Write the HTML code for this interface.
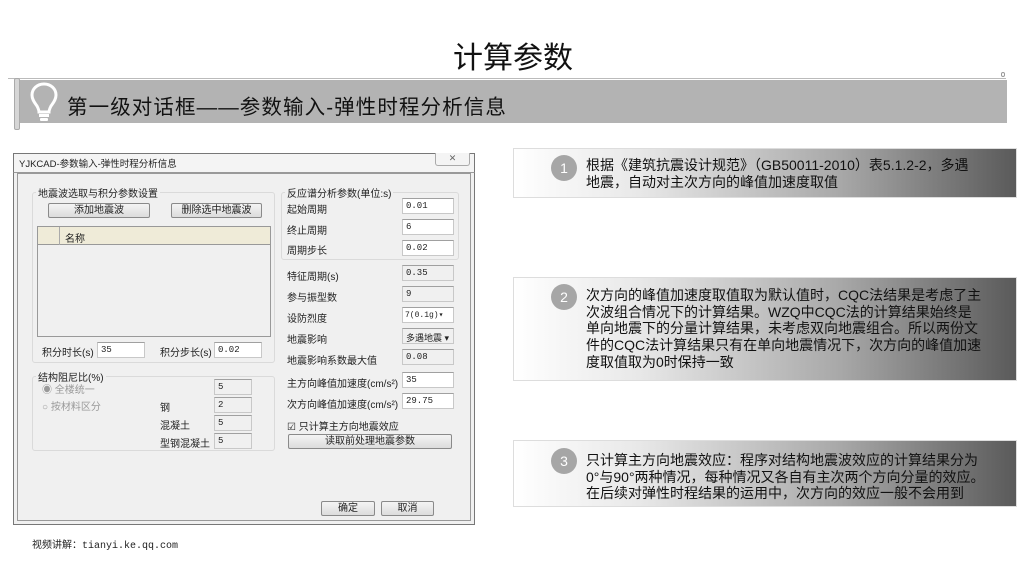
<!DOCTYPE html>
<html><head><meta charset="utf-8"><style>
*{margin:0;padding:0;box-sizing:border-box}
body{width:1024px;height:576px;background:#fff;position:relative;overflow:hidden;font-family:"Liberation Sans","Noto Sans CJK SC",sans-serif}
.a{position:absolute;white-space:nowrap}
.d{font-size:10px;color:#222;font-family:"Liberation Sans","WenQuanYi Zen Hei",sans-serif}
.in{position:absolute;background:#fff;border:1px solid #c8c8c8;border-top-color:#a0a0a0;font-size:9px;padding:2px 3px;height:16px;font-family:"Liberation Mono",monospace;color:#222;white-space:nowrap;overflow:hidden}
.ro{background:#f0f0f0}
.bt{position:absolute;border:1px solid #8a8a8a;border-radius:2px;background:linear-gradient(#f4f4f4,#dcdcdc);font-size:10px;text-align:center;line-height:13px;height:15px;color:#222}
.grp{position:absolute;border:1px solid #dadada;border-radius:3px}
.leg{position:absolute;background:#f0f0f0;padding:0 2px;font-size:10px;color:#222}
.box{position:absolute;left:513px;width:504px;background:linear-gradient(90deg,#fff 0%,#e8e8e8 25%,#a8a8a8 65%,#5a5a5a 100%);border:1px solid #ddd}
.c{position:absolute;left:37px;width:26px;height:26px;border-radius:50%;background:#a6a6a6;color:#fff;font-size:14px;text-align:center;line-height:26px}
.t{position:absolute;left:72px;font-size:14px;line-height:16.7px;color:#111;white-space:nowrap}
</style></head><body>
<div class="a" style="left:453px;top:33px;font-size:30px;color:#111">计算参数</div>
<div class="a" style="left:8px;top:78px;width:998px;height:1px;background:#bbb"></div>
<div class="a" style="left:1001px;top:72px;width:4px;height:5px;border:1px solid #999;border-radius:2px"></div>
<div class="a" style="left:17px;top:80px;width:990px;height:43px;background:#b3b3b3"></div>
<div class="a" style="left:14px;top:78px;width:6px;height:52px;background:#d6d6d6;border:1px solid #aaa;border-radius:2px"></div>
<svg class="a" style="left:30px;top:82px" width="28" height="42" viewBox="0 0 28 42"><path d="M14 2C7 2 2 7 2 13c0 5 3 8 5 11 1 2 2 4 2 6h10c0-2 1-4 2-6 2-3 5-6 5-11 0-6-5-11-12-11z" fill="none" stroke="#fff" stroke-width="3"/><rect x="9" y="32" width="10" height="3" fill="#fff"/><rect x="10" y="36" width="8" height="3" rx="1" fill="#fff"/></svg>
<div class="a" style="left:67px;top:90px;font-size:20.5px;letter-spacing:1.1px;color:#111">第一级对话框——参数输入-弹性时程分析信息</div>

<!-- dialog -->
<div class="a" style="left:13px;top:153px;width:462px;height:372px;background:#f0f0f0;border:1px solid #777"></div>
<div class="a" style="left:13px;top:153px;width:462px;height:20px;background:#f4f4f4;border:1px solid #777;border-bottom:1px solid #999"></div>
<div class="a d" style="left:19px;top:156px;font-size:9.5px">YJKCAD-参数输入-弹性时程分析信息</div>
<div class="a" style="left:435px;top:153px;width:35px;height:13px;border:1px solid #aaa;border-top:none;border-radius:0 0 3px 3px;background:#f4f4f4;font-size:9px;text-align:center;color:#666;line-height:11px">✕</div>
<div class="a" style="left:17px;top:173px;width:454px;height:348px;border:1px solid #999"></div>

<div class="grp" style="left:32px;top:192px;width:243px;height:171px"></div>
<div class="leg d" style="left:36px;top:185px">地震波选取与积分参数设置</div>
<div class="bt" style="left:48px;top:203px;width:102px">添加地震波</div>
<div class="bt" style="left:171px;top:203px;width:91px">删除选中地震波</div>
<div class="a" style="left:37px;top:226px;width:234px;height:111px;background:#f0f0f0;border:1px solid #999"></div>
<div class="a" style="left:38px;top:227px;width:232px;height:18px;background:#efebd8;border-bottom:1px solid #999"></div>
<div class="a" style="left:59px;top:227px;width:1px;height:18px;background:#aaa"></div>
<div class="a d" style="left:65px;top:230px">名称</div>
<div class="a d" style="left:42px;top:344px">积分时长(s)</div>
<div class="in" style="left:97px;top:342px;width:48px">35</div>
<div class="a d" style="left:160px;top:344px">积分步长(s)</div>
<div class="in" style="left:214px;top:342px;width:48px">0.02</div>

<div class="grp" style="left:32px;top:376px;width:243px;height:75px"></div>
<div class="leg d" style="left:36px;top:369px">结构阻尼比(%)</div>
<div class="a d" style="left:42px;top:381px;color:#999">◉ 全楼统一</div>
<div class="a d" style="left:42px;top:398px;color:#999">○ 按材料区分</div>
<div class="in ro" style="left:214px;top:379px;width:38px">5</div>
<div class="a d" style="left:160px;top:399px">钢</div>
<div class="in ro" style="left:214px;top:397px;width:38px">2</div>
<div class="a d" style="left:160px;top:417px">混凝土</div>
<div class="in ro" style="left:214px;top:415px;width:38px">5</div>
<div class="a d" style="left:160px;top:435px">型钢混凝土</div>
<div class="in ro" style="left:214px;top:433px;width:38px">5</div>

<div class="grp" style="left:281px;top:192px;width:178px;height:68px"></div>
<div class="leg d" style="left:285px;top:185px">反应谱分析参数(单位:s)</div>
<div class="a d" style="left:287px;top:201px">起始周期</div><div class="in" style="left:402px;top:198px;width:52px">0.01</div>
<div class="a d" style="left:287px;top:222px">终止周期</div><div class="in" style="left:402px;top:219px;width:52px">6</div>
<div class="a d" style="left:287px;top:242px">周期步长</div><div class="in" style="left:402px;top:240px;width:52px">0.02</div>
<div class="a d" style="left:287px;top:268px">特征周期(s)</div><div class="in ro" style="left:402px;top:265px;width:52px">0.35</div>
<div class="a d" style="left:287px;top:289px">参与振型数</div><div class="in ro" style="left:402px;top:286px;width:52px">9</div>
<div class="a d" style="left:287px;top:310px">设防烈度</div><div class="in" style="left:402px;top:307px;width:52px;font-size:8px;padding:2px 2px">7(0.1g)▾</div>
<div class="a d" style="left:287px;top:331px">地震影响</div><div class="in ro" style="left:402px;top:328px;width:52px;font-family:'WenQuanYi Zen Hei',sans-serif">多遇地震 ▾</div>
<div class="a d" style="left:287px;top:352px">地震影响系数最大值</div><div class="in ro" style="left:402px;top:349px;width:52px">0.08</div>
<div class="a d" style="left:287px;top:375px">主方向峰值加速度(cm/s²)</div><div class="in" style="left:402px;top:372px;width:52px">35</div>
<div class="a d" style="left:287px;top:396px">次方向峰值加速度(cm/s²)</div><div class="in" style="left:402px;top:393px;width:52px">29.75</div>
<div class="a d" style="left:287px;top:418px">☑ 只计算主方向地震效应</div>
<div class="bt" style="left:288px;top:434px;width:164px">读取前处理地震参数</div>
<div class="bt" style="left:321px;top:501px;width:54px">确定</div>
<div class="bt" style="left:381px;top:501px;width:53px">取消</div>

<div class="a" style="left:32px;top:536px;font-size:10px;color:#222;font-family:'Liberation Mono','WenQuanYi Zen Hei',monospace">视频讲解：tianyi.ke.qq.com</div>

<div class="box" style="top:148px;height:50px"><div class="c" style="top:6px">1</div><div class="t" style="top:8px">根据《建筑抗震设计规范》（GB50011-2010）表5.1.2-2，多遇<br>地震，自动对主次方向的峰值加速度取值</div></div>
<div class="box" style="top:277px;height:104px"><div class="c" style="top:6px">2</div><div class="t" style="top:9px">次方向的峰值加速度取值取为默认值时，CQC法结果是考虑了主<br>次波组合情况下的计算结果。WZQ中CQC法的计算结果始终是<br>单向地震下的分量计算结果，未考虑双向地震组合。所以两份文<br>件的CQC法计算结果只有在单向地震情况下，次方向的峰值加速<br>度取值取为0时保持一致</div></div>
<div class="box" style="top:440px;height:67px"><div class="c" style="top:7px">3</div><div class="t" style="top:11px">只计算主方向地震效应：程序对结构地震波效应的计算结果分为<br>0°与90°两种情况，每种情况又各自有主次两个方向分量的效应。<br>在后续对弹性时程结果的运用中，次方向的效应一般不会用到</div></div>
</body></html>
